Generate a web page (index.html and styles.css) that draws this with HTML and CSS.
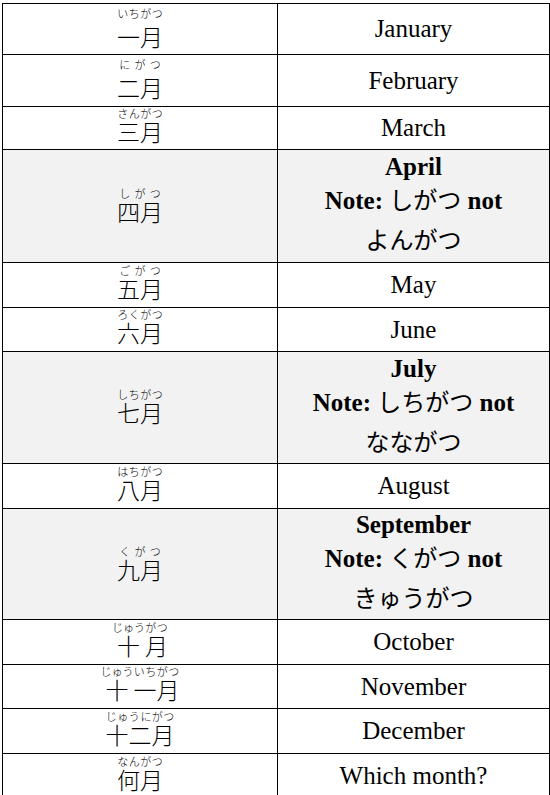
FILE: index.html
```html
<!DOCTYPE html>
<html lang="ja">
<head>
<meta charset="utf-8">
<title>Months</title>
<link rel="stylesheet" href="styles.css">
</head>
<body>
<table class="months">
  <colgroup><col class="c-jp"><col class="c-en"></colgroup>
  <tr class="h51 loose"><td class="jp"><ruby>一月<rt>いちがつ</rt></ruby></td><td class="en">January</td></tr>
  <tr class="h52 loose"><td class="jp"><ruby>二月<rt>にがつ</rt></ruby></td><td class="en">February</td></tr>
  <tr class="h43"><td class="jp"><ruby>三月<rt>さんがつ</rt></ruby></td><td class="en">March</td></tr>
  <tr class="h113 note"><td class="jp"><ruby>四月<rt>しがつ</rt></ruby></td><td class="en"><span class="l1">April</span><span class="l2">Note: <span class="kana">しがつ</span> not</span><span class="l3 kana">よんがつ</span></td></tr>
  <tr class="h45"><td class="jp"><ruby>五月<rt>ごがつ</rt></ruby></td><td class="en">May</td></tr>
  <tr class="h44"><td class="jp"><ruby>六月<rt>ろくがつ</rt></ruby></td><td class="en">June</td></tr>
  <tr class="h112 note"><td class="jp"><ruby>七月<rt>しちがつ</rt></ruby></td><td class="en"><span class="l1">July</span><span class="l2">Note: <span class="kana">しちがつ</span> not</span><span class="l3 kana">なながつ</span></td></tr>
  <tr class="h45"><td class="jp"><ruby>八月<rt>はちがつ</rt></ruby></td><td class="en">August</td></tr>
  <tr class="h111 note"><td class="jp"><ruby>九月<rt>くがつ</rt></ruby></td><td class="en"><span class="l1">September</span><span class="l2">Note: <span class="kana">くがつ</span> not</span><span class="l3 kana">きゅうがつ</span></td></tr>
  <tr class="h45"><td class="jp"><ruby>十<rt>じゅう</rt>月<rt>がつ</rt></ruby></td><td class="en">October</td></tr>
  <tr class="h44"><td class="jp"><ruby>十<rt>じゅう</rt>一<rt>いち</rt>月<rt>がつ</rt></ruby></td><td class="en">November</td></tr>
  <tr class="h45"><td class="jp"><ruby>十二月<rt>じゅうにがつ</rt></ruby></td><td class="en">December</td></tr>
  <tr class="h45 last"><td class="jp"><ruby>何月<rt>なんがつ</rt></ruby></td><td class="en">Which month?</td></tr>
</table>
</body>
</html>
```
FILE: styles.css
```css
html, body {
  margin: 0;
  padding: 0;
  background: #ffffff;
}
body {
  padding: 3px 0 0 2px;
}
.months {
  border-collapse: collapse;
  table-layout: fixed;
  width: 547px;
  color: #000;
}
.c-jp { width: 275px; }
.c-en { width: 272px; }
.months td {
  border: 1px solid #000;
  padding: 0;
  text-align: center;
  vertical-align: middle;
}
.note td { background: #f2f2f2; }
.jp {
  font-family: "Noto Sans CJK JP", sans-serif;
  font-weight: 300;
  font-size: 23px;
  line-height: 24px;
}
.months td.jp {
  padding-bottom: 6px;
}
.months .note td.jp {
  padding-bottom: 2px;
}
.jp rt {
  font-size: 11px;
  line-height: 13px;
}
.loose .jp rt {
  padding-bottom: 4px;
}
.en {
  font-family: "Liberation Serif", "Noto Sans CJK JP", serif;
  font-size: 25px;
  line-height: 30px;
}
.months .note td.en {
  padding-bottom: 2px;
}
.en .l1,
.en .l2,
.en .l3 {
  display: block;
}
.en .l1 {
  font-weight: bold;
  line-height: 31px;
}
.en .l2 {
  font-weight: bold;
  line-height: 37px;
}
.kana {
  font-family: "Noto Sans CJK JP", sans-serif;
  font-weight: 400;
  font-size: 24px;
  line-height: 1;
}
.en .l3.kana {
  line-height: 40px;
}
.h51 { height: 51px; }
.h52 { height: 52px; }
.h43 { height: 43px; }
.h44 { height: 44px; }
.h45 { height: 45px; }
.h111 { height: 111px; }
.h112 { height: 112px; }
.h113 { height: 113px; }
```
